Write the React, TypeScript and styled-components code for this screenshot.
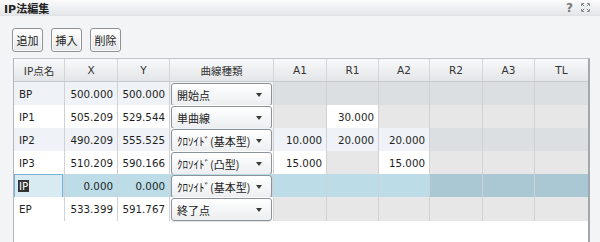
import styled, { createGlobalStyle } from 'styled-components';

const GlobalStyle = createGlobalStyle`
  html, body {
    margin:0;
    padding:0;
    background:#f3f4f6;
  }
  body {
    font-family:"DejaVu Sans", "Noto Sans CJK JP", sans-serif;
    color:#1f1f1f;
  }
`

const COLS = '51px 53px 52px 104px 53px 52px 51px 53px 52px 53px'

const Window = styled.div`
  width:600px;
  height:242px;
  overflow:hidden;
  display:flex;
  flex-direction:column;
`

const TitleBar = styled.div`
  height:16px;
  display:flex;
  align-items:center;
  justify-content:space-between;
  padding:0 10px 0 4px;
  background:linear-gradient(#fbfbfc, #e4e6e8);
  border-bottom:1px solid #dfe1e4;
  box-sizing:border-box;
`

const Title = styled.span`
  font-size:11px;
  font-weight:bold;
  color:#222;
`

const TitleIcons = styled.div`
  display:flex;
  align-items:center;
  gap:8px;
`

const HelpMark = styled.span`
  font-family:"DejaVu Sans", sans-serif;
  font-size:12px;
  font-weight:bold;
  color:#76797c;
  line-height:1;
`

const Toolbar = styled.div`
  display:flex;
  gap:8px;
  padding:12px 0 0 12px;
`

const ToolButton = styled.button`
  width:31px;
  height:24px;
  padding:0;
  font-family:"Noto Sans CJK JP", sans-serif;
  font-size:11px;
  color:#222;
  border:1px solid #8f9396;
  border-radius:3px;
  background:linear-gradient(#ffffff, #e6e7e9);
  box-shadow:inset 0 0 0 1px #fbfbfb;
`

const GridBox = styled.div`
  margin:6px 0 0 13px;
  width:574px;
  flex:1;
  background:#fff;
  border-top:1px solid #bfc3c7;
  border-left:1px solid #b4b8bc;
  border-right:2px solid #a3a8ad;
`

const HeaderRow = styled.div`
  display:grid;
  grid-template-columns:${COLS};
  height:23px;
  background:linear-gradient(#f8f9fa, #e3e5e8);
  border-bottom:1px solid #c6c9cd;
  box-sizing:border-box;
`

const HeadCell = styled.div`
  display:flex;
  align-items:center;
  justify-content:center;
  font-size:10.5px;
  color:#333;
  border-right:1px solid #d3d6d9;
  &:last-child { border-right:none; }
`

const Row = styled.div`
  display:grid;
  grid-template-columns:${COLS};
  height:23px;
`

const Cell = styled.div<{ $bg: string; $right?: boolean }>`
  display:flex;
  align-items:center;
  justify-content:${p => p.$right ? 'flex-end' : 'flex-start'};
  padding:0 4px 0 5px;
  box-sizing:border-box;
  font-size:10.3px;
  background:${p => p.$bg};
  border-right:1px solid #cfd1d4;
  &:last-child { border-right:none; }
`

const FocusCell = styled.div`
  flex:1;
  align-self:stretch;
  display:flex;
  align-items:center;
  padding-left:3px;
  margin:0 1px 0 0;
  background:#d8ebf2;
  border:1px solid #79b1d0;
  font-size:10.3px;
`

const Selected = styled.span`
  background:#333;
  color:#fff;
  padding:0 1px;
`

const SelectCell = styled.div<{ $bg: string }>`
  display:flex;
  padding:0 1px;
  background:${p => p.$bg};
  border-right:1px solid #cfd1d4;
`

const Dropdown = styled.div`
  flex:1;
  margin-top:1px;
  height:21px;
  display:flex;
  align-items:center;
  justify-content:space-between;
  padding:0 9px 0 5px;
  border:1px solid #8b9299;
  border-radius:3px;
  background:linear-gradient(#ffffff, #eceef0);
  box-shadow:0 1px 1px rgba(0,0,0,0.12);
  font-family:"Noto Sans CJK JP", sans-serif;
  font-size:11px;
  color:#222;
`

const Arrow = styled.span`
  width:0;
  height:0;
  border-left:3.5px solid transparent;
  border-right:3.5px solid transparent;
  border-top:4px solid #3a3a3a;
`

type Tone = 'normal' | 'alt' | 'sel'

const TONES: Record<Tone, { on: string; off: string }> = {
  normal: { on: '#ffffff', off: '#e7e7e7' },
  alt: { on: '#eff2f6', off: '#dcdfe2' },
  sel: { on: '#bcdde8', off: '#a9c8d3' },
}

interface IpRow {
  name: string
  x: string
  y: string
  type: string
  params: (string | null)[]
  tone: Tone
  focus?: boolean
}

const rows: IpRow[] = [
  { name: 'BP', x: '500.000', y: '500.000', type: '開始点', params: [null, null, null, null, null, null], tone: 'alt' },
  { name: 'IP1', x: '505.209', y: '529.544', type: '単曲線', params: [null, '30.000', null, null, null, null], tone: 'normal' },
  { name: 'IP2', x: '490.209', y: '555.525', type: 'ｸﾛｿｲﾄﾞ(基本型)', params: ['10.000', '20.000', '20.000', null, null, null], tone: 'alt' },
  { name: 'IP3', x: '510.209', y: '590.166', type: 'ｸﾛｿｲﾄﾞ(凸型)', params: ['15.000', null, '15.000', null, null, null], tone: 'normal' },
  { name: 'IP', x: '0.000', y: '0.000', type: 'ｸﾛｿｲﾄﾞ(基本型)', params: ['', '', '', null, null, null], tone: 'sel', focus: true },
  { name: 'EP', x: '533.399', y: '591.767', type: '終了点', params: [null, null, null, null, null, null], tone: 'normal' },
]

const headers = ['IP点名', 'X', 'Y', '曲線種類', 'A1', 'R1', 'A2', 'R2', 'A3', 'TL']

function ResizeIcon() {
  return (
    <svg width="9" height="9" viewBox="0 0 9 9" fill="none" stroke="#8d9093" strokeWidth="1">
      <path d="M0.5 3V0.5H3M6 0.5H8.5V3M8.5 6V8.5H6M3 8.5H0.5V6" />
      <path d="M1 1L3.2 3.2M8 1L5.8 3.2M8 8L5.8 5.8M1 8L3.2 5.8" />
    </svg>
  )
}

export default function App() {
  return (
    <Window>
      <GlobalStyle />
      <TitleBar>
        <Title>IP法編集</Title>
        <TitleIcons>
          <HelpMark>?</HelpMark>
          <ResizeIcon />
        </TitleIcons>
      </TitleBar>
      <Toolbar>
        <ToolButton>追加</ToolButton>
        <ToolButton>挿入</ToolButton>
        <ToolButton>削除</ToolButton>
      </Toolbar>
      <GridBox>
        <HeaderRow>
          {headers.map(h => <HeadCell key={h}>{h}</HeadCell>)}
        </HeaderRow>
        {rows.map(r => {
          const tone = TONES[r.tone]
          return (
            <Row key={r.name}>
              {r.focus
                ? <Cell $bg={tone.on} style={{ padding: 0 }}><FocusCell><Selected>{r.name}</Selected></FocusCell></Cell>
                : <Cell $bg={tone.on}>{r.name}</Cell>}
              <Cell $bg={tone.on} $right>{r.x}</Cell>
              <Cell $bg={tone.on} $right>{r.y}</Cell>
              <SelectCell $bg={tone.on}>
                <Dropdown>
                  <span>{r.type}</span>
                  <Arrow />
                </Dropdown>
              </SelectCell>
              {r.params.map((v, i) => (
                <Cell key={i} $bg={v === null ? tone.off : tone.on} $right>{v}</Cell>
              ))}
            </Row>
          )
        })}
      </GridBox>
    </Window>
  )
}
